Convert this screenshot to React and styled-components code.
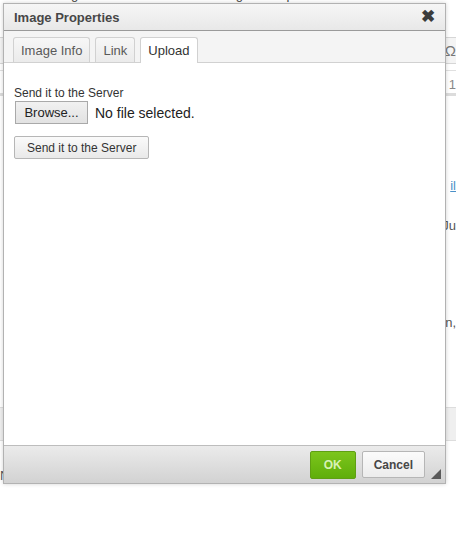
import React from "react";
import styled, { createGlobalStyle } from "styled-components";

const Global = createGlobalStyle`
  html, body { margin: 0; padding: 0; background: #fff; }
  body { font-family: "Liberation Sans", Arial, sans-serif; overflow: hidden; }
  #root { width: 456px; height: 540px; }
`;

const Page = styled.div`
  position: relative;
  width: 456px;
  height: 540px;
  overflow: hidden;
  background: #fff;
  color: #333;
  font-size: 13px;
`;

const TopLine = styled.div`
  margin-top: -12px;
  height: 14px;
  line-height: 14px;
  font-size: 13px;
  color: #444;
  white-space: nowrap;
  padding-left: 6px;
`;

const EditorToolbar = styled.div`
  margin-top: 35px;
  height: 25px;
  border-top: 1px solid #d6d6d6;
  border-bottom: 1px solid #d6d6d6;
  background: #f4f4f4;
  display: flex;
  justify-content: flex-end;
  align-items: center;
  font-size: 15px;
  color: #777;
`;

const EditorBar = styled.div`
  margin-top: 6px;
  height: 18px;
  padding-top: 4px;
  border-top: 1px solid #e0e0e0;
  border-bottom: 3px solid #dcdcdc;
  display: flex;
  justify-content: flex-end;
  align-items: center;
  font-size: 13px;
  color: #888;
`;

const PageText = styled.div`
  display: flex;
  justify-content: ${(p) => (p.$left ? "flex-start" : "flex-end")};
  font-size: 13px;
  color: ${(p) => p.$color || "#555"};
  text-decoration: ${(p) => (p.$link ? "underline" : "none")};
  margin-top: ${(p) => p.$top}px;
  height: 16px;
  line-height: 16px;
`;

const GreyBar = styled.div`
  margin-top: 76px;
  height: 32px;
  width: 456px;
  background: #efefef;
  border-top: 1px solid #ddd;
  border-bottom: 1px solid #ddd;
`;

const Dialog = styled.div`
  position: absolute;
  left: 3px;
  top: 3px;
  width: 441px;
  height: 479px;
  border: 1px solid #b2b2b2;
  background: #fff;
  display: flex;
  flex-direction: column;
  box-shadow: 0 0 4px rgba(0, 0, 0, 0.18);
`;

const TitleBar = styled.div`
  height: 26px;
  flex: none;
  display: flex;
  align-items: center;
  justify-content: space-between;
  padding: 0 10px 0 10px;
  background: linear-gradient(#f6f6f6, #e8e8e8);
  border-bottom: 1px solid #9a9a9a;
`;

const Title = styled.div`
  font-weight: bold;
  font-size: 13px;
  color: #474747;
`;

const Close = styled.div`
  font-weight: bold;
  font-size: 17px;
  color: #3c3c3c;
  line-height: 1;
  margin-top: -2px;
`;

const TabStrip = styled.div`
  height: 31px;
  flex: none;
  background: #f4f4f4;
  border-bottom: 1px solid #d1d1d1;
  display: flex;
  align-items: flex-end;
  gap: 5px;
  padding-left: 9px;
`;

const Tab = styled.div`
  padding: 0 7px;
  display: flex;
  align-items: center;
  font-size: 13px;
  color: ${(p) => (p.$active ? "#333" : "#595959")};
  background: ${(p) => (p.$active ? "#fff" : "linear-gradient(#f7f7f7, #ebebeb)")};
  border: 1px solid #d1d1d1;
  border-bottom: none;
  border-radius: 3px 3px 0 0;
  margin-bottom: ${(p) => (p.$active ? "-1px" : "0")};
  height: ${(p) => (p.$active ? "25px" : "24px")};
`;

const Body = styled.div`
  flex: 1;
  padding: 23px 10px 0 10px;
  display: flex;
  flex-direction: column;
  align-items: flex-start;
`;

const Label = styled.div`
  font-size: 12px;
  color: #333;
  line-height: 14px;
`;

const FileRow = styled.div`
  display: flex;
  align-items: center;
  gap: 7px;
  margin-top: 1px;
`;

const Browse = styled.div`
  width: 71px;
  height: 21px;
  margin-left: 1px;
  border: 1px solid #a9a9a9;
  background: linear-gradient(#f1f1f1, #e2e2e2);
  display: flex;
  align-items: center;
  justify-content: center;
  font-size: 13px;
  color: #222;
`;

const NoFile = styled.div`
  font-size: 14px;
  color: #222;
`;

const SendButton = styled.div`
  margin-top: 12px;
  height: 21px;
  padding: 0 12px;
  border: 1px solid #b6b6b6;
  border-radius: 2px;
  background: linear-gradient(#fafafa, #e9e9e9);
  display: flex;
  align-items: center;
  font-size: 12px;
  color: #333;
`;

const Footer = styled.div`
  height: 37px;
  flex: none;
  border-top: 1px solid #bdbdbd;
  background: linear-gradient(#ebebeb, #d2d2d2);
  display: flex;
  align-items: center;
  justify-content: flex-end;
  padding-right: 4px;
  position: relative;
`;

const Btn = styled.div`
  height: ${(p) => (p.$ok ? 26 : 25)}px;
  padding: 0 ${(p) => (p.$ok ? 13 : 11)}px;
  margin-right: ${(p) => p.$mr}px;
  border-radius: 2px;
  display: flex;
  align-items: center;
  font-size: 12px;
  font-weight: bold;
  color: ${(p) => (p.$ok ? "#d8f1b4" : "#474747")};
  background: ${(p) => (p.$ok ? "linear-gradient(#7cc51c, #5fae0a)" : "linear-gradient(#fbfbfb, #ececec)")};
  border: 1px solid ${(p) => (p.$ok ? "#5f9f13" : "#b6b6b6")};
`;

const Grip = styled.svg`
  position: absolute;
  right: 4px;
  bottom: 4px;
`;

export default function App() {
  return (
    <>
      <Global />
      <Page>
        <TopLine>the following is the standard Editor configuration provided with the standard</TopLine>
        <EditorToolbar>Ω</EditorToolbar>
        <EditorBar>1</EditorBar>
        <PageText $top={82} $color="#4a90c8" $link>il</PageText>
        <PageText $top={24}>Ju</PageText>
        <PageText $top={81}>n,</PageText>
        <GreyBar />
        <PageText $top={27} $left>N</PageText>
        <Dialog>
          <TitleBar>
            <Title>Image Properties</Title>
            <Close>✖</Close>
          </TitleBar>
          <TabStrip>
            <Tab>Image Info</Tab>
            <Tab>Link</Tab>
            <Tab $active>Upload</Tab>
          </TabStrip>
          <Body>
            <Label>Send it to the Server</Label>
            <FileRow>
              <Browse>Browse...</Browse>
              <NoFile>No file selected.</NoFile>
            </FileRow>
            <SendButton>Send it to the Server</SendButton>
          </Body>
          <Footer>
            <Btn $ok $mr={6}>OK</Btn>
            <Btn $mr={16}>Cancel</Btn>
            <Grip width="10" height="10" viewBox="0 0 10 10">
              <polygon points="10,0 10,10 0,10" fill="#5a5a5a" />
            </Grip>
          </Footer>
        </Dialog>
      </Page>
    </>
  );
}
